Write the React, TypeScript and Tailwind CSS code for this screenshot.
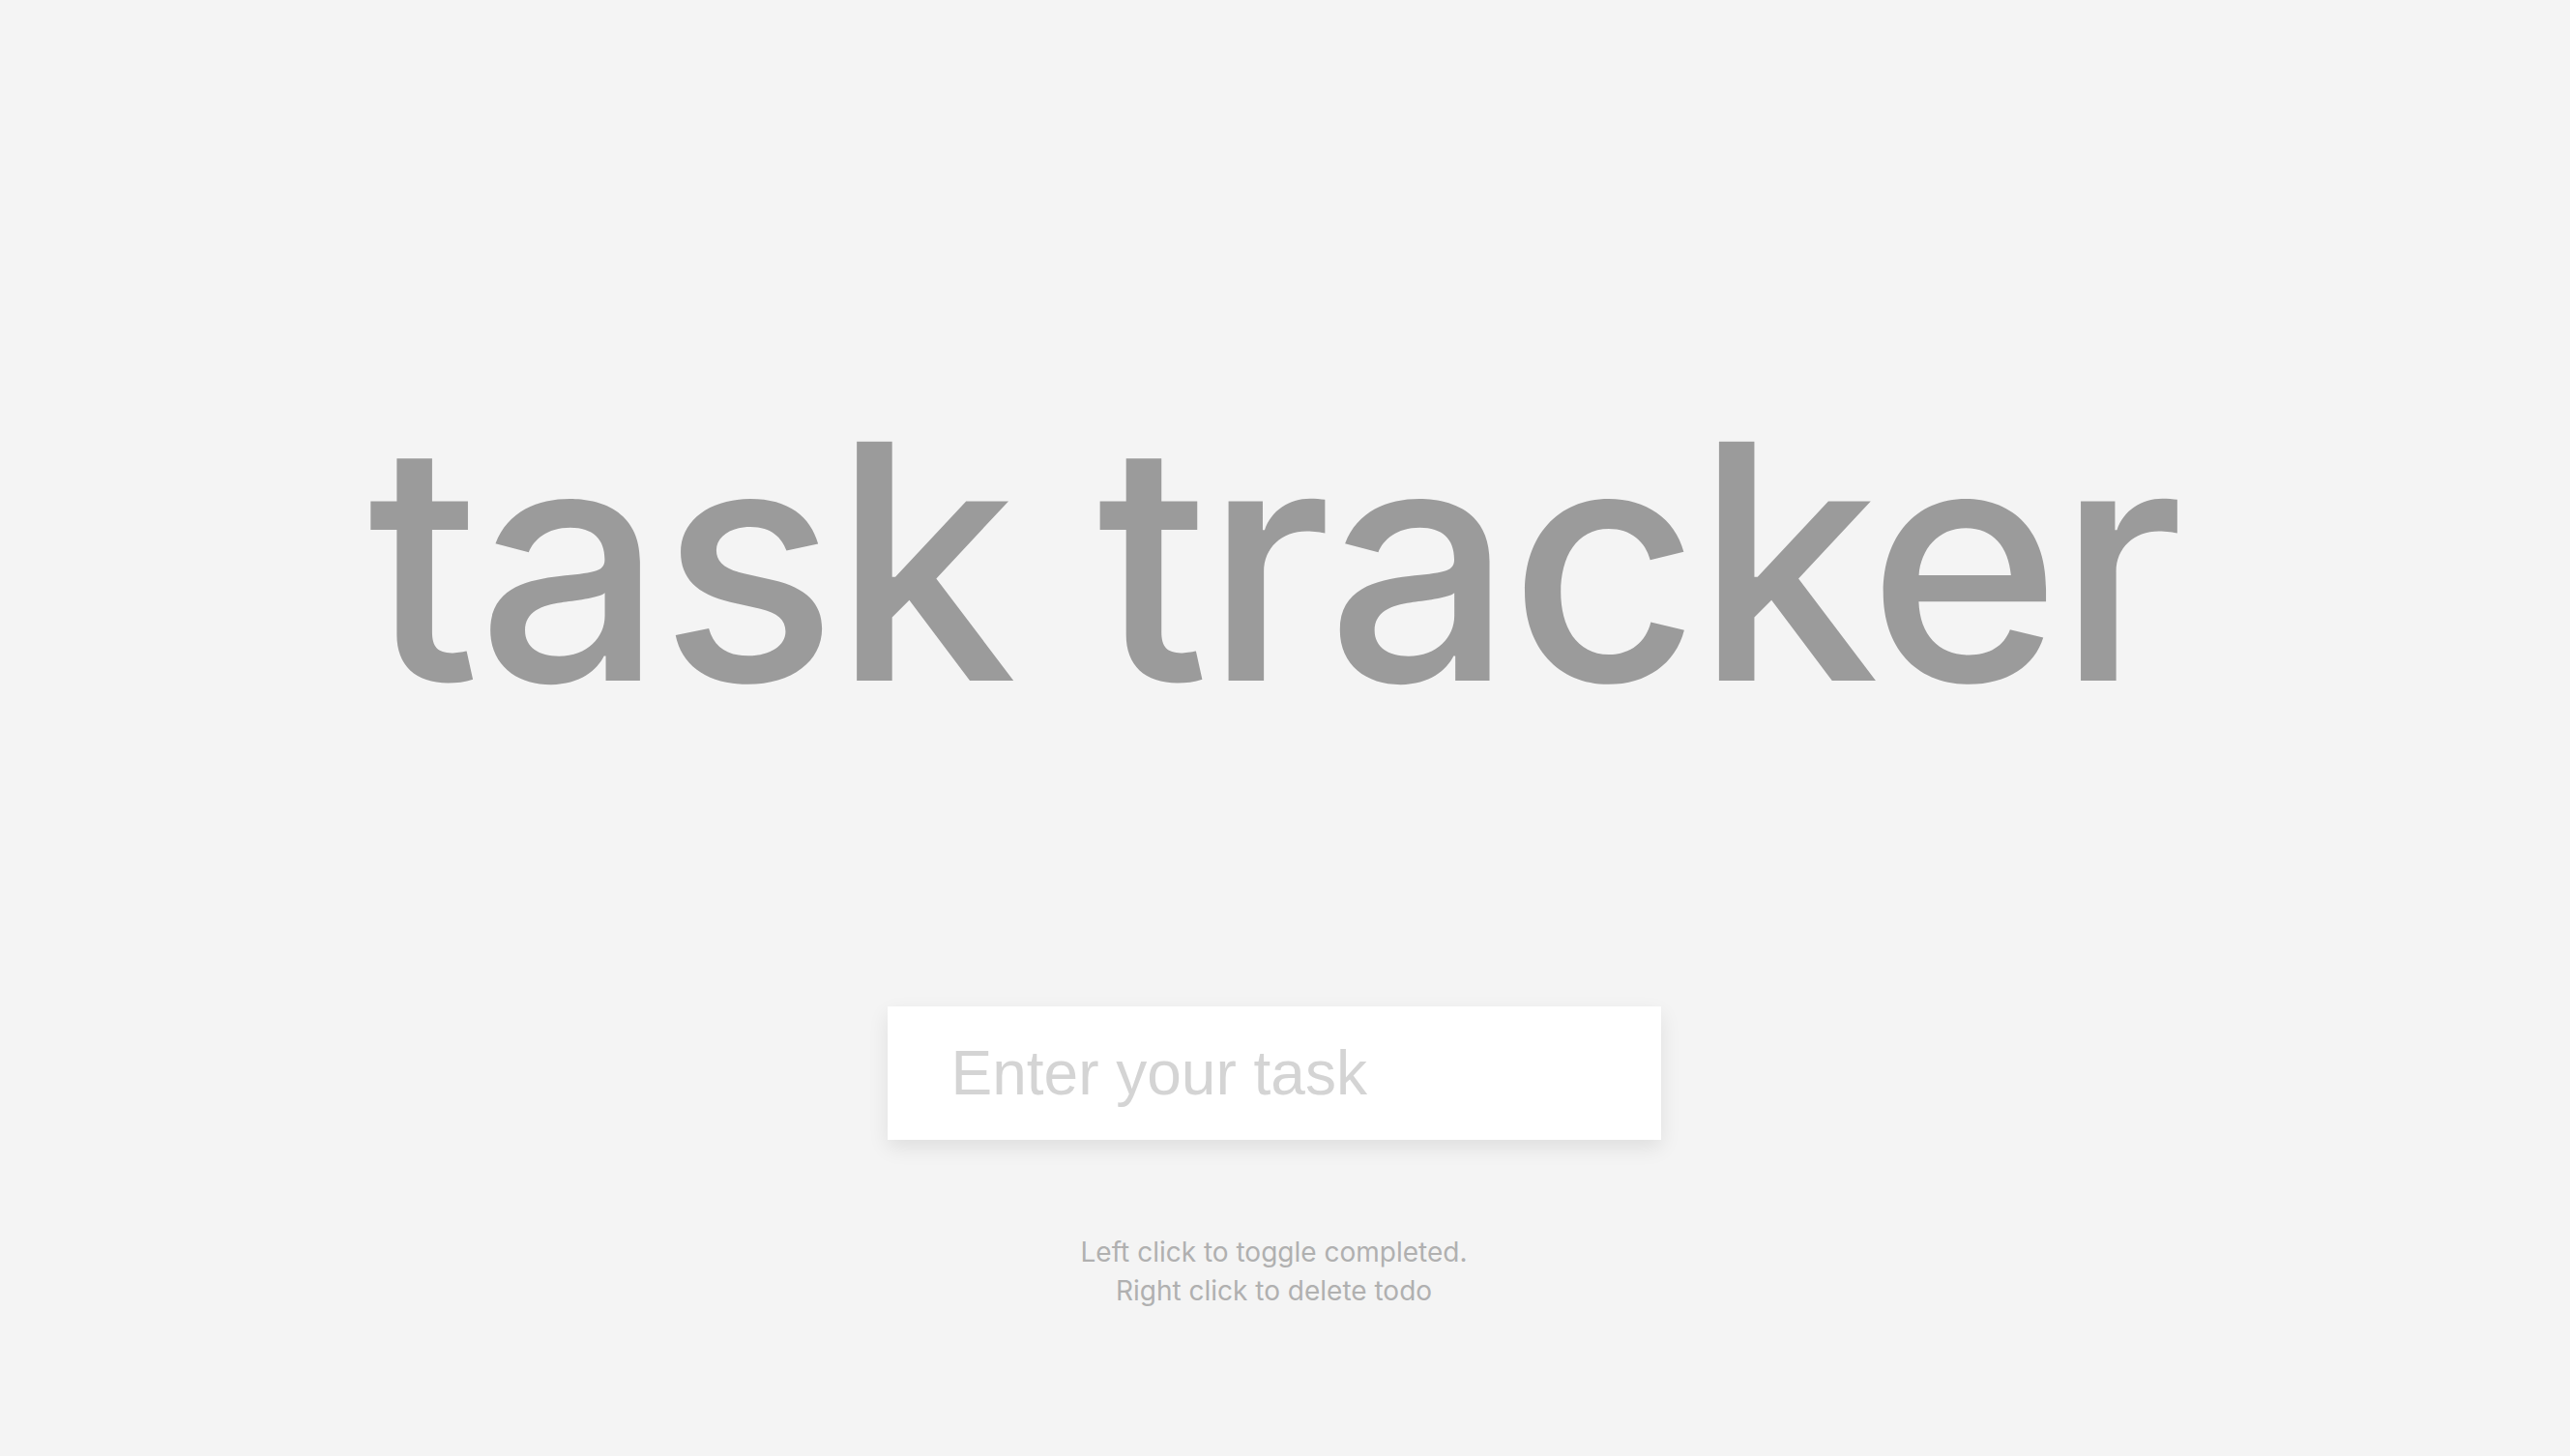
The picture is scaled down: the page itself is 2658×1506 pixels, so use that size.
import { useState } from "react"

type Todo = { text: string; done: boolean }

export default function App() {
  const [todos, setTodos] = useState<Todo[]>([])
  const [value, setValue] = useState("")

  const addTodo = (e: React.FormEvent) => {
    e.preventDefault()
    if (!value.trim()) return
    setTodos([...todos, { text: value.trim(), done: false }])
    setValue("")
  }

  return (
    <div className="min-h-screen w-full bg-[#f4f4f4] flex flex-col items-center pr-[23px] font-['Inter',sans-serif]">
      <h1 className="mt-[411px] text-[340px] leading-none font-medium tracking-[-4px] text-[#9b9b9b] whitespace-nowrap">
        task tracker
      </h1>

      <form onSubmit={addTodo} className="mt-[290px]">
        <input
          type="text"
          value={value}
          onChange={(e) => setValue(e.target.value)}
          placeholder="Enter your task"
          className="w-[800px] h-[138px] px-[66px] bg-white text-[64px] text-[#9b9b9b] placeholder-[#d4d4d4] font-['Liberation_Sans',Arial,sans-serif] outline-none shadow-[0_8px_20px_rgba(0,0,0,0.09)]"
        />
      </form>

      {todos.length > 0 && (
        <ul className="mt-10 w-[800px] flex flex-col gap-4">
          {todos.map((todo, i) => (
            <li
              key={i}
              onClick={() =>
                setTodos(todos.map((t, j) => (j === i ? { ...t, done: !t.done } : t)))
              }
              onContextMenu={(e) => {
                e.preventDefault()
                setTodos(todos.filter((_, j) => j !== i))
              }}
              className={`bg-white px-[66px] py-6 text-[40px] text-[#9b9b9b] cursor-pointer ${
                todo.done ? "line-through opacity-50" : ""
              }`}
            >
              {todo.text}
            </li>
          ))}
        </ul>
      )}

      <div className="mt-[96px] text-center text-[28px] leading-[40px] text-[#b0b0b0]">
        <p>Left click to toggle completed.</p>
        <p>Right click to delete todo</p>
      </div>
    </div>
  )
}
